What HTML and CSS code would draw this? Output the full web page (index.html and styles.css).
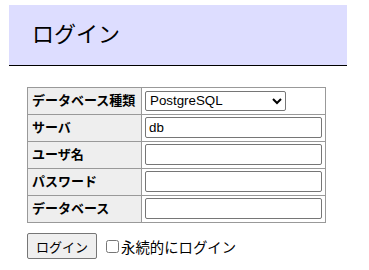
FILE: index.html
```html
<!DOCTYPE html>
<html lang="ja">
<head>
<meta charset="utf-8">
<title>ログイン</title>
<link rel="stylesheet" href="styles.css">
</head>
<body>
<div class="page">
  <h2 class="title">ログイン</h2>
  <form class="login">
    <table class="grid">
      <tr><th>データベース種類</th><td><select class="driver"><option>PostgreSQL</option><option>MySQL / MariaDB</option><option>SQLite</option></select></td></tr>
      <tr><th>サーバ</th><td><input class="field" type="text" value="db"></td></tr>
      <tr><th>ユーザ名</th><td><input class="field" type="text"></td></tr>
      <tr><th>パスワード</th><td><input class="field" type="password"></td></tr>
      <tr><th>データベース</th><td><input class="field" type="text"></td></tr>
    </table>
    <div class="actions">
      <button class="btn" type="button">ログイン</button>
      <label class="perm"><input class="check" type="checkbox">永続的にログイン</label>
    </div>
  </form>
</div>
</body>
</html>
```
FILE: styles.css
```css
html, body {
  margin: 0;
  padding: 0;
  background: #fff;
}
body {
  font-family: "Liberation Sans", "Noto Sans CJK JP", sans-serif;
  font-size: 13px;
  color: #000;
}
.page {
  padding: 5px 0 0 9px;
  width: 338px;
}
.title {
  margin: 0;
  font-size: 22px;
  font-weight: normal;
  line-height: 28px;
  padding: 16px 23px;
  background: #ddf;
  border-bottom: 1px solid #000;
}
.login {
  margin: 21px 0 0 18px;
}
.grid {
  border-collapse: collapse;
  border: 1px solid #999;
}
.grid th, .grid td {
  border: 1px solid #999;
  padding: 2px 3px 3px 3px;
  height: 21px;
  vertical-align: middle;
}
.grid th {
  background: #eee;
  text-align: left;
  font-weight: bold;
  padding-left: 4px;
  width: 106px;
  white-space: nowrap;
  line-height: 21px;
}
.grid td {
  width: 177px;
  line-height: 0;
}
.field {
  box-sizing: border-box;
  width: 177px;
  height: 21px;
  margin: 0;
  padding: 1px 3px;
  border: 1px solid #767676;
  border-radius: 2px;
  font-family: "Liberation Sans", Arial, sans-serif;
  font-size: 13.33px;
  background: #fff;
}
.driver {
  box-sizing: border-box;
  width: 141px;
  height: 20px;
  margin: 0;
  font-family: "Liberation Sans", Arial, sans-serif;
  font-size: 13.33px;
  border: 1px solid #767676;
  border-radius: 2px;
  background: #fff;
}
.actions {
  display: flex;
  align-items: center;
  margin-top: 10px;
}
.btn {
  box-sizing: border-box;
  width: 70px;
  height: 26px;
  margin: 0;
  padding: 0 6px;
  font-family: "Liberation Sans", "Noto Sans CJK JP", sans-serif;
  font-size: 13px;
  background: #efefef;
  border: 1px solid #767676;
  border-radius: 2px;
  color: #000;
}
.perm {
  display: flex;
  align-items: center;
  margin-left: 9px;
  font-size: 14.4px;
}
.check {
  width: 13px;
  height: 13px;
  margin: 0 2px 0 0;
}
```
